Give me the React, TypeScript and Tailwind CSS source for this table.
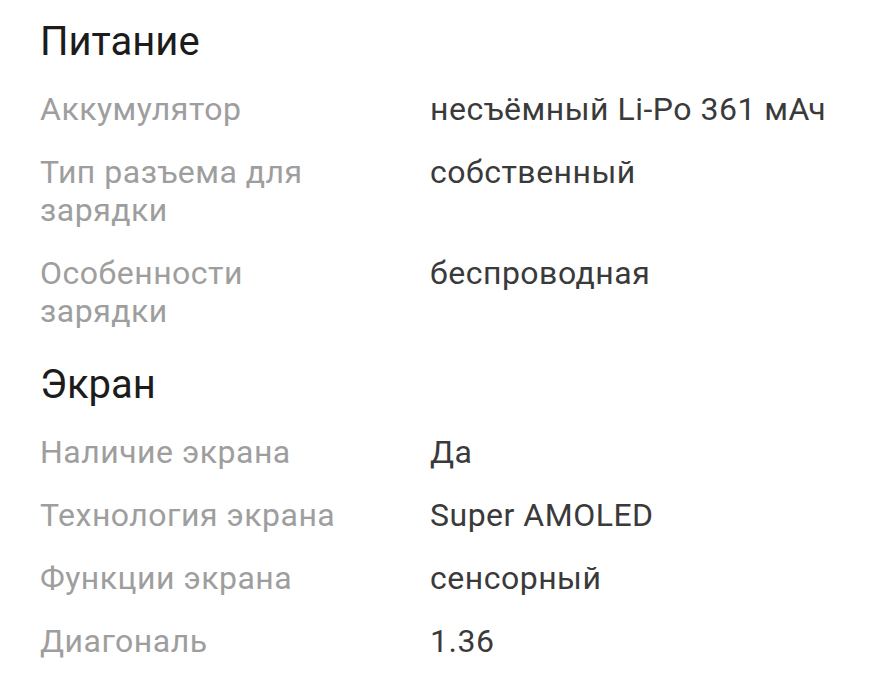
const sections = [
  {
    title: "Питание",
    rows: [
      ["Аккумулятор", "несъёмный Li-Po 361 мАч"],
      ["Тип разъема для зарядки", "собственный"],
      ["Особенности зарядки", "беспроводная"],
    ],
  },
  {
    title: "Экран",
    rows: [
      ["Наличие экрана", "Да"],
      ["Технология экрана", "Super AMOLED"],
      ["Функции экрана", "сенсорный"],
      ["Диагональ", "1.36"],
    ],
  },
];

export default function App() {
  return (
    <div className="min-h-screen bg-white px-10 pt-[18px] font-['Roboto',sans-serif]">
      <div className="flex flex-col gap-[31px]">
        {sections.map((section) => (
          <section key={section.title}>
            <h2 className="text-[40px] leading-[48px] text-[#1c1c1c] mb-[24px]">
              {section.title}
            </h2>
            <div className="flex flex-col gap-[25px]">
              {section.rows.map(([label, value]) => (
                <div key={label} className="flex text-[32px] leading-[38px] tracking-[0.5px]">
                  <div className="w-[390px] shrink-0 pr-[64px] text-[#9e9e9e]">{label}</div>
                  <div className="text-[#3a3a3a]">{value}</div>
                </div>
              ))}
            </div>
          </section>
        ))}
      </div>
    </div>
  );
}
